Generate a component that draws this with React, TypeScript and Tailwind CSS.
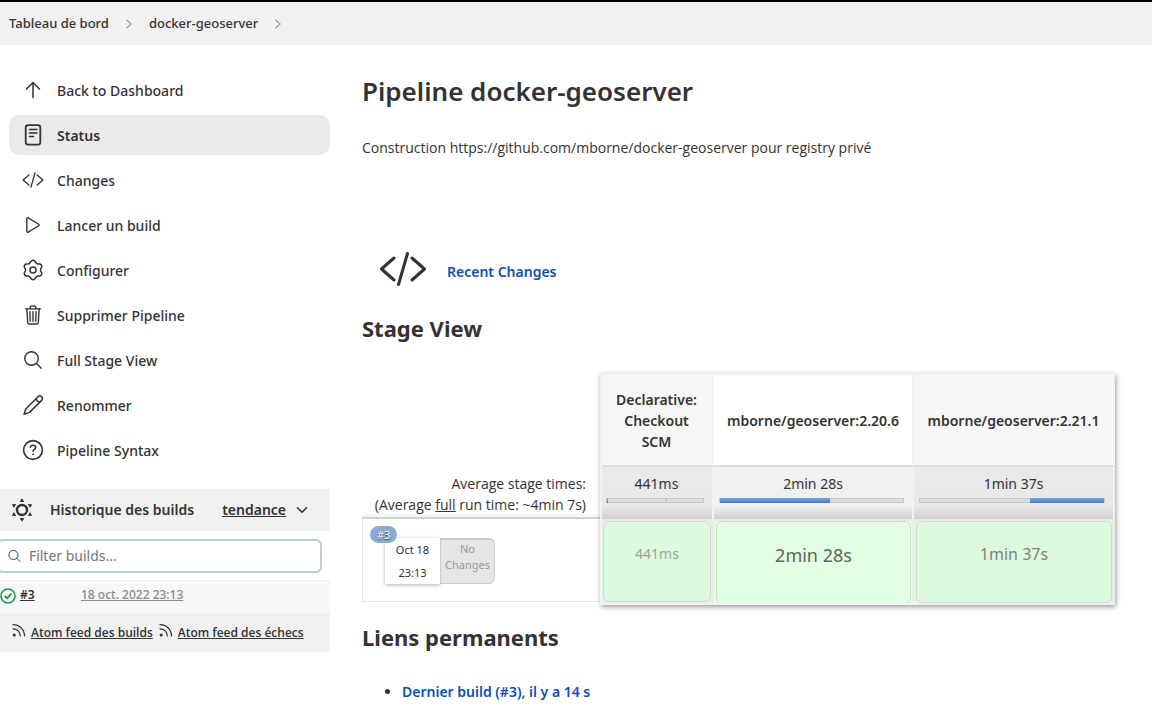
import React from "react";
import { IoChevronDownOutline, IoPlayOutline, IoSearchOutline, IoTrashOutline } from "react-icons/io5";

type IconProps = { className?: string };

function ArrowUpIcon({ className }: IconProps) {
  return (
    <svg viewBox="0 0 24 24" className={className} fill="none" stroke="currentColor" strokeWidth="1.5" strokeLinecap="round" strokeLinejoin="round">
      <path d="M5.500 11 12 4.500l6.500 6.500M12 5v14.500" />
    </svg>
  );
}

function StatusIcon({ className }: IconProps) {
  return (
    <svg viewBox="0 0 24 24" className={className} fill="none" stroke="currentColor" strokeLinecap="round">
      <rect x="4.7" y="2.2" width="14.6" height="19.4" rx="2.4" strokeWidth="1.8" />
      <path d="M8.5 6.500h7.500M8.500 10h7.500M8.500 13.500h4" strokeWidth="1.600" />
    </svg>
  );
}

function CodeIcon({ className }: IconProps) {
  return (
    <svg viewBox="0 0 48 48" className={className} fill="none" stroke="currentColor" strokeWidth="3" strokeLinecap="round" strokeLinejoin="round">
      <path d="M15 13 2.500 24 15 35M33 13l12.500 11L33 35M28.500 8.500l-9 31" />
    </svg>
  );
}

const gearPath =
  "M" +
  Array.from({ length: 72 }, (_, i) => {
    const a = (i * Math.PI) / 36;
    const c = Math.cos(6 * a);
    const r = 8.6 + 1.1 * Math.sign(c) * Math.pow(Math.abs(c), 0.7);
    return `${(12 + r * Math.sin(a)).toFixed(2)} ${(12 - r * Math.cos(a)).toFixed(2)}`;
  }).join("L") +
  "Z";

function GearIcon({ className }: IconProps) {
  return (
    <svg viewBox="0 0 24 24" className={className} fill="none" stroke="currentColor" strokeWidth="1.5" strokeLinejoin="round">
      <path d={gearPath} />
      <circle cx="12" cy="12" r="3" />
    </svg>
  );
}

function PencilIcon({ className }: IconProps) {
  return (
    <svg viewBox="0 0 24 24" className={className} fill="none" stroke="currentColor" strokeWidth="1.500" strokeLinejoin="round">
      <path d="M3 21.200 4.800 16 17 3.700a2.600 2.600 0 0 1 3.700 3.700L8.400 19.400 3 21.200ZM15.200 5.600c.4 1.700 1.800 3.100 3.600 3.500" />
    </svg>
  );
}

function HelpIcon({ className }: IconProps) {
  return (
    <svg viewBox="0 0 24 24" className={className} fill="none" stroke="currentColor" strokeWidth="1.6" strokeLinecap="round">
      <circle cx="12" cy="12" r="9.4" />
      <path d="M9.4 9.3c.1-1.4 1.1-2.1 2.6-2.1 1.6 0 2.7.9 2.7 2.2 0 1.900-2.700 2-2.700 3.900" />
      <circle cx="12" cy="16.3" r=".5" fill="currentColor" strokeWidth="1" />
    </svg>
  );
}

function SunIcon({ className }: IconProps) {
  return (
    <svg viewBox="0 0 24 24" className={className} fill="currentColor">
      <circle cx="12" cy="12" r="5" fill="none" stroke="currentColor" strokeWidth="2.4" />
      {[0, 60, 120, 180, 240, 300].map((a) => (
        <path key={a} d="M12 .3 14.4 4H9.6Z" transform={`rotate(${a} 12 12)`} />
      ))}
    </svg>
  );
}

function FeedIcon({ className }: IconProps) {
  return (
    <svg viewBox="0 0 16 16" className={className} fill="none" stroke="currentColor" strokeWidth="1.2" strokeLinecap="round">
      <path d="M2 1.700c6.600 0 11.500 4.900 11.500 11.300M2 5.800c4.200 0 7.300 3.100 7.300 7.200" />
      <circle cx="3.2" cy="12" r="1" fill="currentColor" />
    </svg>
  );
}

function SuccessIcon({ className }: IconProps) {
  return (
    <svg viewBox="0 0 16 16" className={className} fill="none" stroke="#1b9a44" strokeLinecap="round" strokeLinejoin="round">
      <circle cx="8" cy="8" r="7" strokeWidth="1.6" />
      <path d="m5.200 8.400 2 1.900 3.700-4.300" strokeWidth="1.900" />
    </svg>
  );
}

function Separator() {
  return (
    <svg viewBox="0 0 8 10" className="h-[10px] w-2 text-[#999]" fill="none" stroke="currentColor" strokeWidth="1.3" aria-hidden="true">
      <path d="m1.500.8 4.500 4.200-4.500 4.200" />
    </svg>
  );
}

const tasks = [
  { label: "Back to Dashboard", Icon: ArrowUpIcon, size: "size-6" },
  { label: "Status", Icon: StatusIcon, size: "size-6", active: true },
  { label: "Changes", Icon: CodeIcon, size: "size-[22px]" },
  { label: "Lancer un build", Icon: IoPlayOutline, size: "size-[22px]" },
  { label: "Configurer", Icon: GearIcon, size: "size-6" },
  { label: "Supprimer Pipeline", Icon: IoTrashOutline, size: "size-[22px]" },
  { label: "Full Stage View", Icon: IoSearchOutline, size: "size-[22px]" },
  { label: "Renommer", Icon: PencilIcon, size: "size-6" },
  { label: "Pipeline Syntax", Icon: HelpIcon, size: "size-6" },
];

const stages = [
  {
    name: "Declarative: Checkout SCM", time: "441ms", offset: 0, share: 1, tick: true,
    width: "w-[113px]", head: "bg-[#f7f7f7]", average: "from-[#e9e9e9] via-[#e8e8e8]",
    cell: "bg-[#e0f5de]", run: "bg-[#ddf8dd] h-[81px] text-sm text-[#97a997]",
  },
  {
    name: "mborne/geoserver:2.20.6", time: "2min 28s", offset: 0, share: 60, tick: false,
    width: "w-[200px]", head: "bg-white", average: "from-[#f1f1f1] via-[#f0f0f0]",
    cell: "bg-[#e8fbe5]", run: "bg-[#e3ffe3] h-[83px] text-lg text-[#5b675b]",
  },
  {
    name: "mborne/geoserver:2.21.1", time: "1min 37s", offset: 60, share: 40, tick: false,
    width: "w-[201px]", head: "bg-[#f7f7f7]", average: "from-[#e9e9e9] via-[#e8e8e8]",
    cell: "bg-[#e0f5de]", run: "bg-[#ddf8dd] h-[82px] text-base text-[#788878]",
  },
];

function Sidebar() {
  return (
    <aside className="w-[330px] shrink-0 pt-[25px]">
      <nav className="flex flex-col gap-[5px] pl-[9px]">
        {tasks.map(({ label, Icon, size, active }) => (
          <a key={label} href="#" className={`flex h-10 items-center gap-3 rounded-[10px] pl-3 text-sm ${active ? "bg-[#eaeaea] font-semibold" : "font-medium"}`}>
            <span className="flex w-6 justify-center"><Icon className={size} /></span>
            <span className="pt-px">{label}</span>
          </a>
        ))}
      </nav>

      <section className="mt-[19px]">
        <div className="flex h-[42px] items-center bg-[#f1f1f1] pl-[10px] text-sm font-semibold">
          <SunIcon className="size-6" />
          <h2 className="ml-4">Historique des builds</h2>
          <a href="#" className="ml-7 underline">tendance</a>
          <button type="button" aria-label="Replier" className="ml-2"><IoChevronDownOutline className="size-4" /></button>
        </div>
        <label className="mt-2 mr-2 -ml-[3px] flex h-[34px] items-center gap-[7px] rounded-md border-2 border-[#c0cccf] bg-white pl-2">
          <IoSearchOutline className="size-4" />
          <input type="text" aria-label="Filter builds" placeholder="Filter builds..." className="w-full bg-transparent text-sm outline-none placeholder:text-[#757575]" />
        </label>
        <div className="mt-[7px] flex h-[33px] items-center border-t border-[#f1f1f1] bg-[#f8f8f8] pb-1 text-xs font-semibold">
          <SuccessIcon className="mt-px size-4" />
          <a href="#" className="ml-1 w-[61px]"><span className="underline">#3</span></a>
          <a href="#" className="font-medium text-[#888] underline">18 oct. 2022 23:13</a>
        </div>
        <div className="flex h-[39px] items-center gap-[5px] bg-[#f1f1f1] pl-[11px] font-['Open_Sans','Noto_Sans',sans-serif] text-xs font-semibold">
          {["Atom feed des builds", "Atom feed des échecs"].map((t) => (
            <a key={t} href="#" className="flex items-center gap-1">
              <FeedIcon className="mb-1 size-4" />
              <span className="underline">{t}</span>
            </a>
          ))}
        </div>
      </section>
    </aside>
  );
}

function StageTable() {
  return (
    <div className="relative mt-[30px] w-fit">
      <table className="border-separate border-spacing-0 text-center text-sm">
        <thead>
          <tr className="h-[94px]">
            <td className="w-[239px] min-w-[239px]" />
            {stages.map((s) => (
              <th key={s.name} scope="col" className={`${s.width} ${s.head} border-r-2 border-b-2 border-r-[#f1f1f1] border-b-[#ddd] px-[10px] pt-[2px] leading-[21px] font-semibold`}>{s.name}</th>
            ))}
          </tr>
        </thead>
        <tbody>
          <tr className="h-[52px]">
            <th scope="row" className="border-b-2 border-[#d2d2d2] bg-linear-to-b from-white from-90% to-[#f3f3f3] p-0 pt-[6px] pr-[15px] text-right align-top font-['Open_Sans','Noto_Sans',sans-serif] leading-[21px] font-normal">
              Average stage times:<br />
              (Average <span className="underline">full</span> run time: ~4min 7s)
            </th>
            {stages.map((s) => (
              <td key={s.name} className={`border-r-2 border-[#f1f1f1] bg-linear-to-b from-0% via-75% to-[#d0d0d0] p-0 px-[5px] pt-[6px] align-top leading-[21px] ${s.average}`}>
                {s.time}
                <div className="relative mt-[4px] mr-[3px] h-[5px] border border-[#c8c8c8] bg-[#dedede]">
                  {s.tick && <div className="absolute inset-y-0 left-[60%] w-[2px] bg-[#c8c8c8]" />}
                  <div className="relative -mt-px h-[5px] border-b border-[#4673c6] bg-linear-to-b from-[#79a3d3] to-[#5588d5]" style={{ marginLeft: `${s.offset}%`, width: `${s.share}%` }} />
                </div>
              </td>
            ))}
          </tr>
          <tr>
            <td className="p-0 align-top">
              <div className="relative h-[83px] border-b border-l border-[#e8e8e8] pt-[19px] pl-[22px]">
                <div className="flex w-[110px] text-xs">
                  <div className="w-[55px] bg-white text-[11px] leading-[23px] shadow-[0_1px_4px_rgba(0,0,0,0.3)]">
                    Oct 18<br />23:13
                  </div>
                  <div className="h-[46px] w-[55px] rounded-r-md border border-t-2 border-[#ccc] bg-[#e5e5e5] pt-px text-[11px] leading-4 text-[#999]">
                    No Changes
                  </div>
                </div>
                <span className="absolute top-[7px] left-[7px] rounded-full bg-[#88abd1] px-[7px] text-[11px] leading-[17px] text-white [text-shadow:0_1px_1px_#345]">#3</span>
              </div>
            </td>
            {stages.map((s) => (
              <td key={s.name} className={`border-t-2 border-r-2 border-[#eaeaea] p-0 pr-px pb-px pl-[2px] align-top ${s.cell}`}>
                <div className={`flex items-center justify-center rounded-md border border-[#ccdccc] pb-4 ${s.run}`}>{s.time}</div>
              </td>
            ))}
          </tr>
        </tbody>
      </table>
      <div aria-hidden="true" className="pointer-events-none absolute inset-y-0 right-0 left-[238px] border-2 border-r-0 border-[#f1f1f1] shadow-[1px_2px_5px_rgba(0,0,0,0.4)]" />
    </div>
  );
}

export default function App() {
  return (
    <div className="min-h-screen overflow-x-hidden bg-white font-['Noto_Sans',sans-serif] text-sm text-[#333]">
      <header className="flex h-[45px] items-center gap-4 border-t-2 border-black bg-[#f1f1f1] pl-[9px] text-[13px] font-medium">
        <a href="#">Tableau de bord</a>
        <Separator />
        <a href="#">docker-geoserver</a>
        <Separator />
      </header>
      <div className="flex">
        <Sidebar />
        <main className="min-w-0 flex-1 pt-7 pl-8">
          <h1 className="text-[26px] leading-9 font-semibold">Pipeline docker-geoserver</h1>
          <p className="mt-7 font-['Open_Sans','Noto_Sans',sans-serif] leading-[22px]">Construction https://github.com/mborne/docker-geoserver pour registry privé</p>
          <div className="mt-[86px] flex items-center gap-5 pl-[17px]">
            <CodeIcon className="size-12" />
            <a href="#" className="pt-[6px] font-semibold text-[#0b4fb9]">Recent Changes</a>
          </div>
          <h2 className="mt-5 text-[22px] leading-[30px] font-bold">Stage View</h2>
          <StageTable />
          <h2 className="mt-[17px] text-[22px] leading-[30px] font-bold">Liens permanents</h2>
          <ul className="mt-[30px] list-disc pl-10">
            <li><a href="#" className="font-semibold text-[#0b4fb9]">Dernier build (#3), il y a 14 s</a></li>
          </ul>
        </main>
      </div>
    </div>
  );
}
